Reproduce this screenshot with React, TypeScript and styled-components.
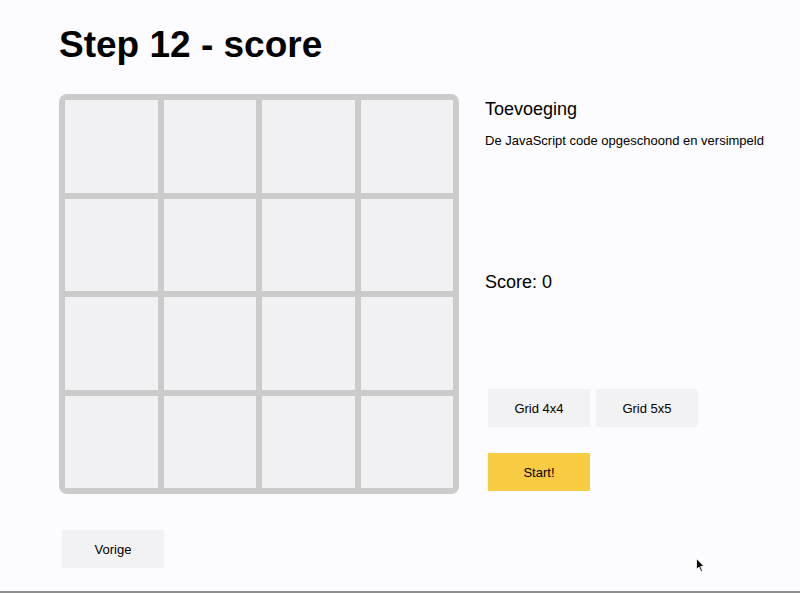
import React from "react";
import styled, { createGlobalStyle } from "styled-components";

const Global = createGlobalStyle`
  html, body {
    margin: 0;
    padding: 0;
    background: #fcfbfd;
  }
  body {
    font-family: "Liberation Sans", Arial, Helvetica, sans-serif;
    color: #000;
  }
  * { box-sizing: border-box; }
`;

const Page = styled.div`
  position: relative;
  height: 593px;
  padding: 24px 0 0 59px;
  border-bottom: 2px solid #8e8e8e;
  overflow: hidden;
`;

const Title = styled.h1`
  margin: 0;
  font-size: 37px;
  line-height: 41px;
  font-weight: 700;
  letter-spacing: 0;
`;

const Main = styled.div`
  display: flex;
  gap: 26px;
  margin-top: 29px;
`;

const Board = styled.div`
  width: 400px;
  height: 400px;
  padding: 6px;
  display: grid;
  grid-template-columns: repeat(4, 1fr);
  grid-template-rows: repeat(4, 1fr);
  gap: 6px;
  background: #cbcbcc;
  border-radius: 8px;
`;

const Cell = styled.div`
  background: #f1f0f2;
`;

const Side = styled.div`
  display: flex;
  flex-direction: column;
  width: 300px;
`;

const Subtitle = styled.h2`
  margin: 5px 0 0;
  font-size: 18px;
  line-height: 21px;
  font-weight: 400;
`;

const Desc = styled.p`
  margin: 13px 0 0;
  font-size: 13px;
  line-height: 15px;
`;

const Score = styled.div`
  margin-top: 124px;
  font-size: 18px;
  line-height: 21px;
`;

const ButtonRow = styled.div<{ $mt: number }>`
  display: flex;
  margin-top: ${(p) => p.$mt}px;
`;

const Button = styled.button<{ $primary?: boolean }>`
  width: 102px;
  height: 38px;
  margin: 3px;
  border: none;
  background: ${(p) => (p.$primary ? "#f9cb42" : "#f2f1f3")};
  font-family: "Liberation Sans", Arial, sans-serif;
  font-size: 13px;
  color: #000;
  cursor: pointer;
  padding: 0;
`;

const Footer = styled.div`
  display: flex;
  margin-top: 33px;
`;

const Cursor = styled.svg`
  position: absolute;
  left: 696px;
  top: 558px;
`;

export default function App() {
  const cells = Array.from({ length: 16 }, (_, i) => i);
  return (
    <>
      <Global />
      <Page>
        <Title>Step 12 - score</Title>
        <Main>
          <Board>
            {cells.map((i) => (
              <Cell key={i} />
            ))}
          </Board>
          <Side>
            <Subtitle>Toevoeging</Subtitle>
            <Desc>De JavaScript code opgeschoond en versimpeld</Desc>
            <Score>Score: 0</Score>
            <ButtonRow $mt={93}>
              <Button>Grid 4x4</Button>
              <Button>Grid 5x5</Button>
            </ButtonRow>
            <ButtonRow $mt={20}>
              <Button $primary>Start!</Button>
            </ButtonRow>
          </Side>
        </Main>
        <Footer>
          <Button>Vorige</Button>
        </Footer>
        <Cursor width="10" height="15" viewBox="0 0 10 15">
          <path d="M0.5 0.5 L0.5 11.5 L3 9 L5 13.5 L6.5 12.8 L4.6 8.5 L8 8.5 Z" fill="#000" stroke="#fff" strokeWidth="0.8" />
        </Cursor>
      </Page>
    </>
  );
}
